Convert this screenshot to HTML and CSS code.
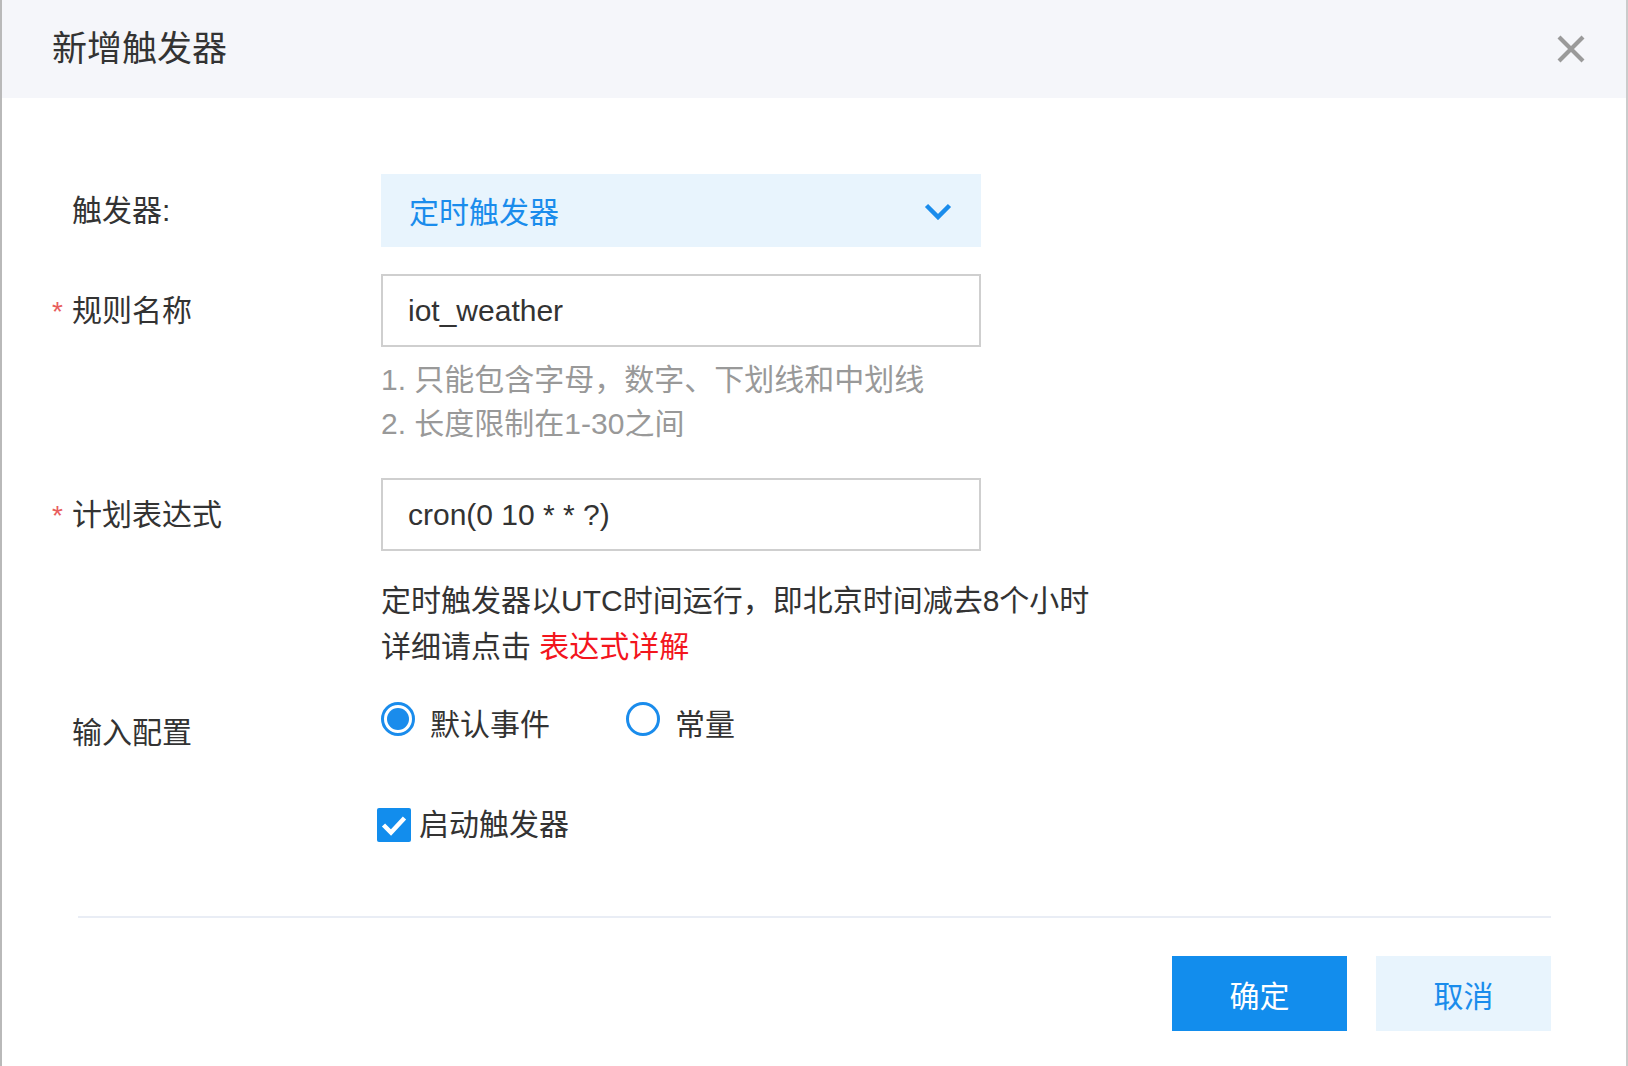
FILE: index.html
```html
<!DOCTYPE html>
<html lang="zh-CN">
<head>
  <meta charset="UTF-8">
  <title>新增触发器</title>
  <link rel="stylesheet" href="styles.css">
</head>
<body>
  <div class="dialog">
    <div class="dialog-head">
      <h1 class="dialog-title">新增触发器</h1>
      <button class="close-btn" type="button">
        <svg width="28" height="28" viewBox="0 0 28 28">
          <path d="M2 2 L26 26 M26 2 L2 26" stroke="#9a9a9a" stroke-width="4.2" fill="none"/>
        </svg>
      </button>
    </div>

    <div class="dialog-body">
      <div class="form-row">
        <div class="form-label">触发器:</div>
        <div class="form-control">
          <div class="select">
            <span class="select-value">定时触发器</span>
            <svg class="chevron" width="28" height="17" viewBox="0 0 28 17">
              <polyline points="2.5,2.5 14,14 25.5,2.5" stroke="#1a8cec" stroke-width="4.5" fill="none"/>
            </svg>
          </div>
        </div>
      </div>

      <div class="form-row row-name">
        <div class="form-label"><span class="required">*</span>规则名称</div>
        <div class="form-control">
          <input class="text-input" type="text" value="iot_weather">
          <div class="help">
            <div>1. 只能包含字母，数字、下划线和中划线</div>
            <div>2. 长度限制在1-30之间</div>
          </div>
        </div>
      </div>

      <div class="form-row row-cron">
        <div class="form-label"><span class="required">*</span>计划表达式</div>
        <div class="form-control">
          <input class="text-input" type="text" value="cron(0 10 * * ?)">
          <div class="note">
            <div>定时触发器以UTC时间运行，即北京时间减去8个小时</div>
            <div>详细请点击 <a class="link" href="#">表达式详解</a></div>
          </div>
        </div>
      </div>

      <div class="form-row row-config">
        <div class="form-label">输入配置</div>
        <div class="form-control radio-group">
          <label class="radio checked"><span class="radio-dot"></span>默认事件</label>
          <label class="radio"><span class="radio-dot"></span>常量</label>
        </div>
      </div>

      <div class="form-row row-enable">
        <div class="form-label"></div>
        <div class="form-control">
          <label class="checkbox">
            <span class="checkbox-box">
              <svg width="34" height="34" viewBox="0 0 34 34">
                <polyline points="6.5,17 14,24.5 27.5,10" stroke="#fff" stroke-width="4.5" fill="none"/>
              </svg>
            </span>
            启动触发器
          </label>
        </div>
      </div>
    </div>

    <div class="dialog-foot">
      <button class="btn btn-primary" type="button">确定</button>
      <button class="btn btn-light" type="button">取消</button>
    </div>
  </div>
</body>
</html>
```

FILE: styles.css
```css
body {
  margin: 0;
  font-family: "Liberation Sans", "Noto Sans CJK SC", sans-serif;
  color: #333;
  background: #fff;
}

.dialog {
  width: 1628px;
  height: 1066px;
  box-sizing: border-box;
  border-left: 2px solid #b9b9b9;
  border-right: 2px solid #cbcbcb;
  background: #fff;
}

.dialog-head {
  height: 98px;
  background: #f5f6fa;
  display: flex;
  align-items: center;
  justify-content: space-between;
  padding: 0 41px 0 50px;
}

.dialog-title {
  margin: 0;
  font-size: 35px;
  font-weight: normal;
  line-height: 40px;
  color: #333;
}

.close-btn {
  border: 0;
  background: none;
  padding: 0;
  width: 28px;
  height: 28px;
  cursor: pointer;
}

.close-btn svg {
  display: block;
}

.dialog-body {
  padding: 76px 0 0 50px;
}

.form-row {
  display: flex;
}

.form-label {
  width: 329px;
  flex: none;
  box-sizing: border-box;
  padding-left: 20px;
  font-size: 30px;
  line-height: 73px;
  color: #333;
}

.required {
  display: inline-block;
  width: 20px;
  margin-left: -20px;
  color: #e85d5d;
  font-size: 28px;
}

.form-control {
  width: 600px;
  font-size: 30px;
}

.select {
  height: 73px;
  background: #e8f4fd;
  display: flex;
  align-items: center;
  justify-content: space-between;
  padding: 0 29px 0 28px;
  color: #1a8cec;
  line-height: 40px;
}

.select-value {
  margin-top: 4px;
}

.chevron {
  display: block;
  margin-top: 2px;
}

.row-name {
  margin-top: 27px;
}

.text-input {
  display: block;
  width: 100%;
  height: 73px;
  box-sizing: border-box;
  border: 2px solid #cfcfcf;
  padding: 0 25px;
  margin: 0;
  font: inherit;
  font-size: 30px;
  color: #333;
  outline: none;
  background: #fff;
}

.help {
  margin-top: 11px;
  line-height: 44px;
  color: #999;
}

.row-cron {
  margin-top: 32px;
}

.note {
  margin-top: 27px;
  line-height: 46px;
  color: #333;
  white-space: nowrap;
}

.link {
  color: #f3151d;
  text-decoration: none;
}

.row-config {
  margin-top: 34px;
  align-items: flex-start;
}

.row-config .form-label {
  line-height: 42px;
  padding-top: 8px;
}

.radio-group {
  display: flex;
  line-height: 42px;
  height: 42px;
}

.radio {
  display: flex;
  align-items: center;
  gap: 15px;
  color: #333;
}

.radio + .radio {
  margin-left: 76px;
}

.radio-dot {
  position: relative;
  width: 34px;
  height: 34px;
  box-sizing: border-box;
  border: 3px solid #1a8cec;
  border-radius: 50%;
  margin-bottom: 12px;
}

.radio.checked .radio-dot::after {
  content: '';
  position: absolute;
  top: 3px;
  left: 3px;
  width: 22px;
  height: 22px;
  border-radius: 50%;
  background: #1a8cec;
}

.row-enable {
  margin-top: 50px;
}

.row-enable .form-label {
  line-height: 42px;
}

.checkbox {
  display: flex;
  align-items: center;
  gap: 8px;
  margin-left: -4px;
  line-height: 42px;
  color: #333;
}

.checkbox-box {
  width: 34px;
  height: 34px;
  background: #128ded;
  border-radius: 2px;
}

.checkbox-box svg {
  display: block;
}

.dialog-foot {
  margin: 70px 75px 0 76px;
  border-top: 2px solid #e9edf5;
  padding-top: 38px;
  display: flex;
  justify-content: flex-end;
  gap: 29px;
}

.btn {
  width: 175px;
  height: 75px;
  border: 0;
  padding: 0;
  font-family: inherit;
  font-size: 30px;
  cursor: pointer;
}

.btn-primary {
  background: #128ded;
  color: #fff;
}

.btn-light {
  background: #e8f4fd;
  color: #1a8cec;
}
```
